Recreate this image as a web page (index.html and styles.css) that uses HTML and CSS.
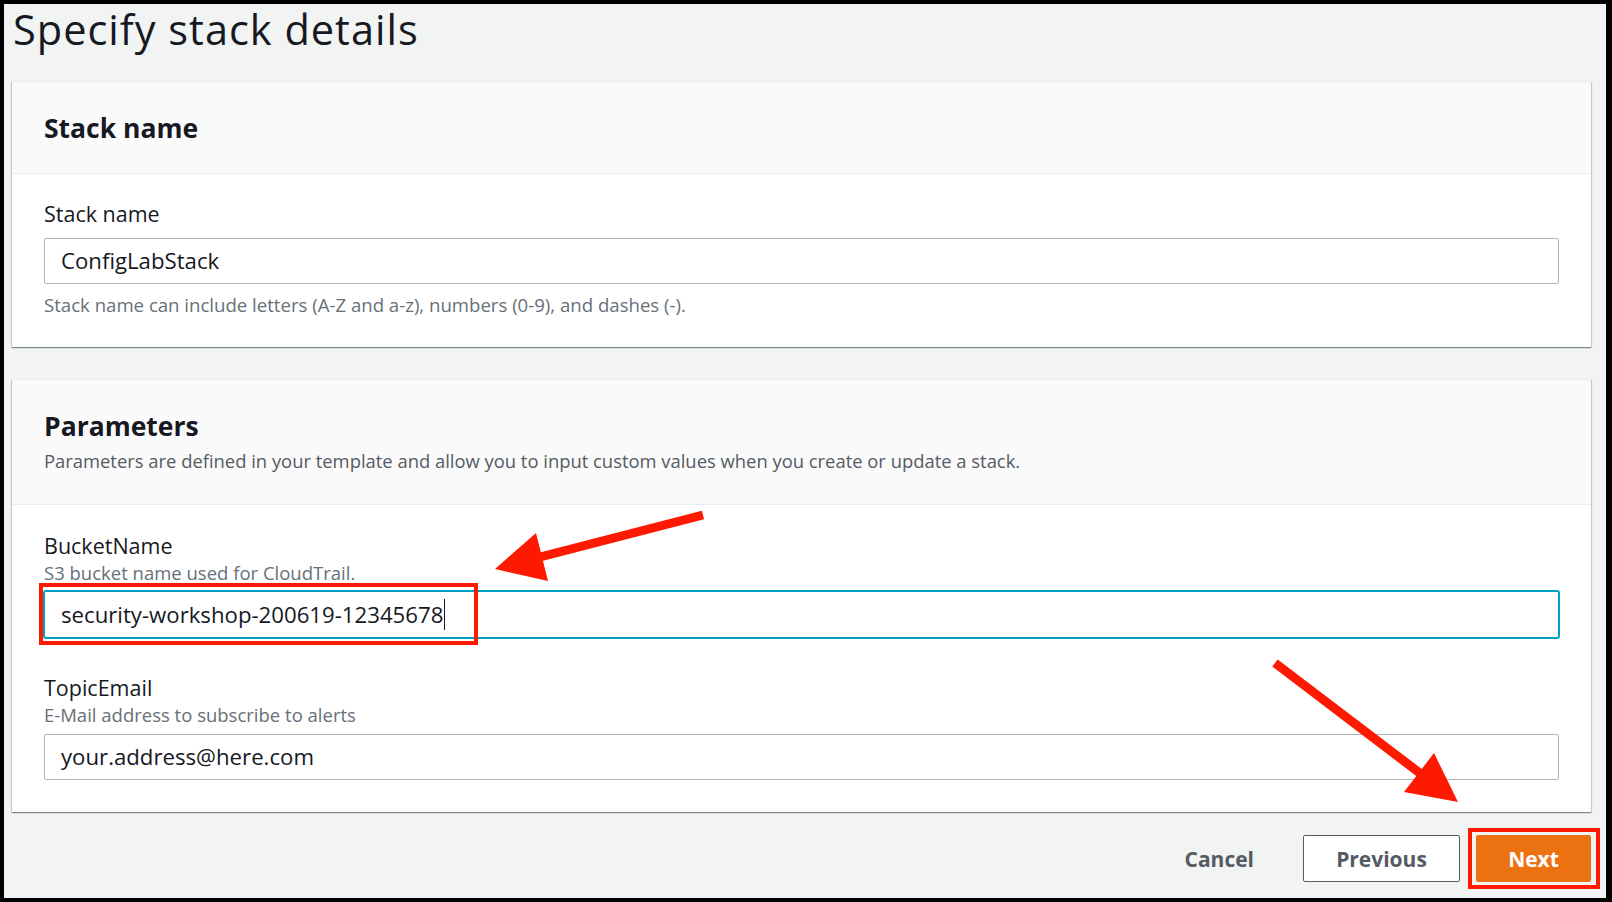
FILE: index.html
```html
<!DOCTYPE html>
<html lang="en">
<head>
<meta charset="utf-8">
<title>Specify stack details</title>
<link rel="stylesheet" href="styles.css">
</head>
<body>
<div class="frame">
  <h1 class="page-title">Specify stack details</h1>

  <section class="card">
    <header class="card-header">
      <h2 class="card-title">Stack name</h2>
    </header>
    <div class="card-body">
      <div class="field">
        <div class="label">Stack name</div>
        <div class="input">ConfigLabStack</div>
        <div class="help">Stack name can include letters (A-Z and a-z), numbers (0-9), and dashes (-).</div>
      </div>
    </div>
  </section>

  <section class="card card-params">
    <header class="card-header">
      <h2 class="card-title">Parameters</h2>
      <p class="card-desc">Parameters are defined in your template and allow you to input custom values when you create or update a stack.</p>
    </header>
    <div class="card-body">
      <div class="field">
        <div class="label">BucketName</div>
        <div class="desc">S3 bucket name used for CloudTrail.</div>
        <div class="input input-focus"><span class="caret">security-workshop-200619-12345678</span></div>
      </div>
      <div class="field field-next">
        <div class="label">TopicEmail</div>
        <div class="desc">E-Mail address to subscribe to alerts</div>
        <div class="input">your.address@here.com</div>
      </div>
    </div>
  </section>

  <div class="actions">
    <button class="btn btn-link">Cancel</button>
    <button class="btn btn-normal">Previous</button>
    <button class="btn btn-primary">Next</button>
  </div>
</div>

<svg class="annotations" width="1612" height="902" viewBox="0 0 1612 902" xmlns="http://www.w3.org/2000/svg">
  <rect x="41" y="585" width="435" height="58" fill="none" stroke="#fe1a00" stroke-width="4"/>
  <rect x="1470" y="830" width="128" height="57" fill="none" stroke="#fe1a00" stroke-width="4"/>
  <line x1="703" y1="515" x2="540" y2="557" stroke="#fe1a00" stroke-width="9"/>
  <polygon points="495,569 536,533 548,581" fill="#fe1a00"/>
  <line x1="1275" y1="663" x2="1421" y2="774" stroke="#fe1a00" stroke-width="9"/>
  <polygon points="1458,802 1434,753 1404,792" fill="#fe1a00"/>
</svg>
</body>
</html>
```

FILE: styles.css
```css
* { box-sizing: border-box; }

html, body {
  margin: 0;
  padding: 0;
  background: #000;
}

body {
  width: 1612px;
  height: 902px;
  overflow: hidden;
  position: relative;
  font-family: "Open Sans", "Noto Sans", sans-serif;
  color: #16191f;
}

.frame {
  margin: 4px 6px 0 4px;
  height: 894px;
  background: #f2f3f3;
  padding: 0 15px 0 8px;
  display: flex;
  flex-direction: column;
}

.page-title {
  margin: -3px 0 0;
  padding: 0 0 0 1px;
  height: 80px;
  font-size: 41.5px;
  font-weight: 400;
  line-height: 56px;
  letter-spacing: 1px;
}

.card {
  background: #fff;
  border-top: 1px solid #eaeded;
  box-shadow: 0 1px 1px 0 rgba(0, 28, 36, 0.3), 1px 1px 1px 0 rgba(0, 28, 36, 0.15), -1px 1px 1px 0 rgba(0, 28, 36, 0.15);
}

.card + .card { margin-top: 32px; }

.card-header {
  background: #fafafa;
  border-bottom: 1px solid #eaeded;
  padding: 30px 32px 29px;
}

.card-params .card-header { padding-bottom: 32px; }

.card-title {
  margin: 0;
  font-size: 26.5px;
  line-height: 32px;
  font-weight: 700;
}

.card-desc {
  margin: 8px 0 0;
  font-size: 18.4px;
  line-height: 22px;
  color: #545b64;
}

.card-body {
  padding: 28px 32px 31px;
}

.card-params .card-body { padding: 29px 32px 32px; }

.field { display: flex; flex-direction: column; }
.field-next { margin-top: 38px; }

.label {
  font-size: 21.5px;
  line-height: 24px;
}

.desc {
  margin-top: 4px;
  font-size: 18.5px;
  line-height: 22px;
  color: #687078;
}

.help {
  margin-top: 10px;
  font-size: 18.6px;
  line-height: 22px;
  color: #687078;
}

.input {
  margin-top: 12px;
  height: 46px;
  border: 1px solid #aab7b8;
  border-radius: 2px;
  background: #fff;
  padding: 0 16px;
  font-size: 22.2px;
  line-height: 44px;
  color: #16191f;
  white-space: nowrap;
}

.desc + .input { margin-top: 8px; }

.input-focus {
  height: 47px;
  line-height: 45px;
  border-color: #00a1c9;
  box-shadow: 0 0 0 1px #00a1c9;
}

.desc + .input-focus { margin-top: 7px; }

.caret {
  border-right: 1px solid #16191f;
  padding-right: 1px;
}

.actions {
  margin-top: 23px;
  display: flex;
  justify-content: flex-end;
  gap: 16px;
}

.btn {
  height: 47px;
  border-radius: 2px;
  font-family: inherit;
  font-size: 21px;
  font-weight: 700;
  padding: 0 20px;
  cursor: pointer;
}

.btn-link {
  background: transparent;
  border: 1px solid transparent;
  color: #545b64;
  margin-right: 12px;
}

.btn-normal {
  width: 157px;
  background: #fff;
  border: 1px solid #545b64;
  color: #545b64;
}

.btn-primary {
  width: 115px;
  background: #ec7211;
  border: 1px solid #ec7211;
  color: #fff;
}

.annotations {
  position: absolute;
  left: 0;
  top: 0;
  pointer-events: none;
}
```
